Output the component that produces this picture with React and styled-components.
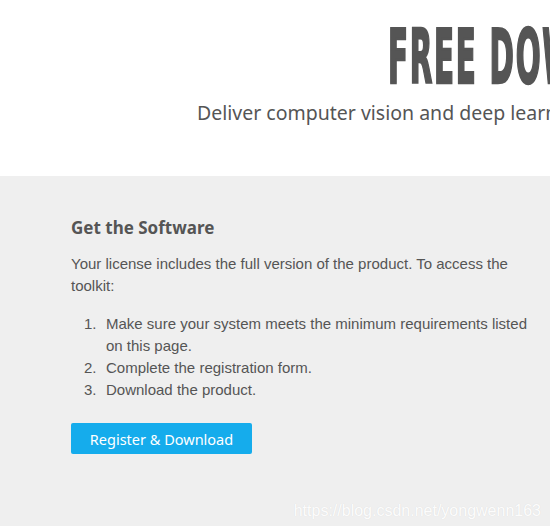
import React from "react";
import styled, { createGlobalStyle } from "styled-components";

const Global = createGlobalStyle`
  html, body { margin: 0; padding: 0; background: #fff; }
  body { overflow: hidden; }
`;

const Page = styled.div`
  width: 550px;
  min-height: 526px;
  display: flex;
  flex-direction: column;
  position: relative;
  overflow: hidden;
`;

const Hero = styled.header`
  height: 176px;
  background: #fff;
  overflow: hidden;
  white-space: nowrap;
  display: flex;
  flex-direction: column;
`;

const Title = styled.h1`
  margin: 0;
  padding: 20px 0 0 388px;
  font-family: "DejaVu Sans Condensed", "DejaVu Sans", sans-serif;
  font-weight: 700;
  font-size: 74px;
  line-height: 74px;
  color: #555555;
  letter-spacing: 4px;
  -webkit-text-stroke: 2.5px #555555;
  transform: scaleX(0.44);
  transform-origin: 388px 0;
`;

const Subtitle = styled.p`
  margin: 0;
  padding: 7px 0 0 197px;
  font-family: "Noto Sans", "Open Sans", sans-serif;
  font-size: 19.5px;
  line-height: 24px;
  color: #555555;
`;

const Section = styled.section`
  flex: 1;
  background: #efefef;
  padding: 40px 14px 30px 71px;
  font-family: "Liberation Sans", Arial, sans-serif;
  color: #555555;
`;

const Heading = styled.h2`
  margin: 0 0 13px;
  font-family: "Noto Sans", "Open Sans", sans-serif;
  font-weight: 700;
  font-size: 17px;
  line-height: 24px;
  color: #555555;
`;

const Para = styled.p`
  margin: 0 0 16px;
  font-size: 15px;
  line-height: 22px;
`;

const Steps = styled.ol`
  margin: 0 0 22px;
  padding: 0 0 0 13px;
  list-style: none;
  counter-reset: step;
  font-size: 15px;
  line-height: 22px;
`;

const Step = styled.li`
  counter-increment: step;
  display: flex;
  &::before {
    content: counter(step) ".";
    flex: 0 0 22px;
  }
`;

const Button = styled.button`
  display: inline-flex;
  align-items: center;
  justify-content: center;
  width: 181px;
  height: 31px;
  border: 0;
  border-radius: 2px;
  background: #15acec;
  color: #fff;
  font-family: "Noto Sans", "Open Sans", sans-serif;
  font-size: 14.5px;
  cursor: pointer;
  padding: 0;
`;

const Watermark = styled.div`
  position: absolute;
  right: 9px;
  bottom: 6px;
  font-family: "Liberation Sans", Arial, sans-serif;
  font-size: 16px;
  color: rgba(255, 255, 255, 0.95);
  text-shadow: 0 0 1px rgba(0, 0, 0, 0.1);
`;

export default function App() {
  return (
    <Page>
      <Global />
      <Hero>
        <Title>FREE DOWNLOAD</Title>
        <Subtitle>Deliver computer vision and deep learning capabilities to your applications.</Subtitle>
      </Hero>
      <Section>
        <Heading>Get the Software</Heading>
        <Para>
          Your license includes the full version of the product. To access the
          toolkit:
        </Para>
        <Steps>
          <Step>Make sure your system meets the minimum requirements listed on this page.</Step>
          <Step>Complete the registration form.</Step>
          <Step>Download the product.</Step>
        </Steps>
        <Button>Register &amp; Download</Button>
      </Section>
      <Watermark>https://blog.csdn.net/yongwenn163</Watermark>
    </Page>
  );
}
